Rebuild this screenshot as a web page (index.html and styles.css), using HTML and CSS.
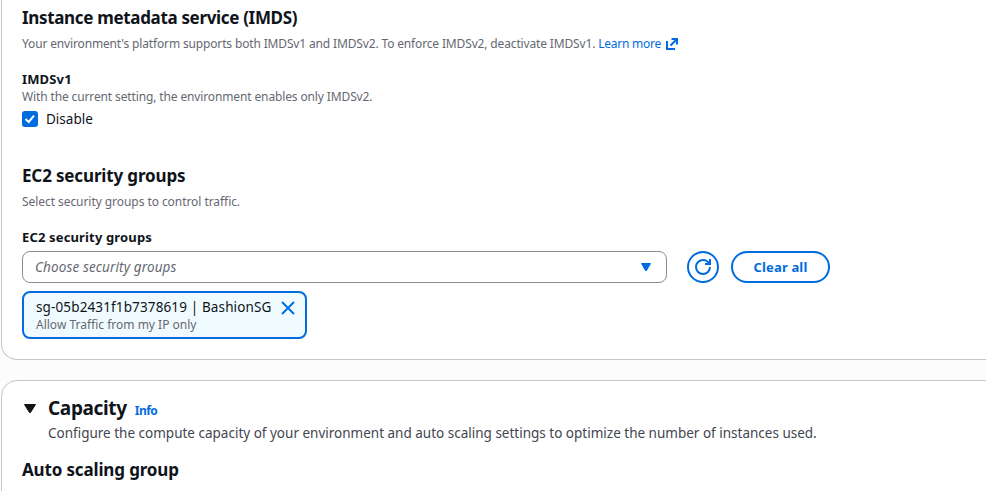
FILE: index.html
```html
<!DOCTYPE html>
<html lang="en">
<head>
<meta charset="utf-8">
<title>Configure instance traffic and scaling</title>
<link rel="stylesheet" href="styles.css">
</head>
<body>
<main class="page">
  <section class="card card-instances">
    <h3 class="heading"><span class="t-imds">Instance metadata service (IMDS)</span></h3>
    <p class="hint hint-section"><span class="t-platform">Your environment's platform supports both IMDSv1 and IMDSv2. To enforce IMDSv2, deactivate IMDSv1.</span><a class="link"><span class="t-learn">Learn more</span><svg class="external" viewBox="0 0 14 14"><path d="M6.5 2H12v5.5M5.5 8.5 12 2M2 4v8h8"/></svg></a></p>
    <div class="label"><span class="t-v1">IMDSv1</span></div>
    <p class="hint"><span class="t-setting">With the current setting, the environment enables only IMDSv2.</span></p>
    <div class="check-row"><span class="checkbox"><svg viewBox="0 0 14 14"><path d="M2.5 7 5.7 10 11 3.6"/></svg></span><span>Disable</span></div>
    <h3 class="heading heading-groups"><span class="t-ec2">EC2 security groups</span></h3>
    <p class="hint hint-section"><span class="t-select">Select security groups to control traffic.</span></p>
    <div class="label"><span class="t-label">EC2 security groups</span></div>
    <div class="controls">
      <div class="select"><span class="t-choose">Choose security groups</span><svg class="caret" viewBox="0 0 16 16"><path d="M3.5 4.5h9L8.5 11.5h-1z"/></svg></div>
      <button class="button refresh" aria-label="Refresh"><svg viewBox="0 0 16 16"><path d="M15 8c0 3.87-3.13 7-7 7s-7-3.13-7-7 3.13-7 7-7c2.79 0 5.2 1.63 6.33 4M10 5h5V0"/></svg></button>
      <button class="button clear"><span class="t-clear">Clear all</span></button>
    </div>
    <div class="token">
      <div class="token-text"><div class="token-name"><span class="t-sg">sg-05b2431f1b7378619 | BashionSG</span></div><p class="hint"><span>Allow Traffic from my IP only</span></p></div>
      <svg class="close" viewBox="0 0 16 16"><path d="m2 2 12 12M14 2 2 14"/></svg>
    </div>
  </section>
  <section class="card card-capacity">
    <div class="capacity-header">
      <svg class="expand" viewBox="0 0 16 16"><path d="M2.5 4.5h11L8.5 12.5h-1z"/></svg>
      <div>
        <h2 class="title"><span class="t-capacity">Capacity</span><a class="info"><span class="t-info">Info</span></a></h2>
        <p class="description"><span>Configure the compute capacity of your environment and auto scaling settings to optimize the number of instances used.</span></p>
      </div>
    </div>
    <h3 class="heading heading-asg"><span class="t-asg">Auto scaling group</span></h3>
  </section>
</main>
</body>
</html>
```
FILE: styles.css
```css
* { box-sizing: border-box; }
body { margin: 0; background: #fcfcfd; color: #0f141a; font: 13.5px/20px "Noto Sans", sans-serif; overflow: hidden; }
h2, h3, p { margin: 0; }
svg { display: block; flex: none; fill: none; stroke: currentColor; stroke-width: 2; }
.page { height: 491px; overflow: hidden; white-space: nowrap; display: flex; flex-direction: column; gap: 20px; }
.card { flex: none; margin-left: 1px; width: 1000px; background: #fff; border: 1px solid #c6c6cd; border-radius: 16px; padding-left: 20px; }
.card-instances { height: 360px; padding-top: 7px; border-top: 0; border-top-left-radius: 0; }
.card-capacity { height: 200px; padding-top: 15px; }
.heading { font-size: 17px; line-height: 22px; font-weight: 700; }
.heading-groups { margin-top: 36px; }
.heading-asg { margin-top: 16px; }
.hint { display: flex; font-size: 12px; line-height: 16px; color: #656871; }
.hint-section { margin: 7px 0 17px; }
.label { font-size: 13px; font-weight: 700; }
.link { display: flex; align-items: center; gap: 4px; margin-left: 3px; color: #006ce0; }
.external { width: 14px; height: 14px; }
.check-row { display: flex; align-items: center; gap: 8px; margin-top: 4px; }
.checkbox { width: 16px; height: 16px; padding: 1px; border-radius: 3px; background: #006ce0; color: #fff; }
.controls { display: flex; margin-top: 4px; }
.select { display: flex; align-items: center; justify-content: space-between; width: 645px; height: 32px; padding: 0 12px; border: 1px solid #8c8c94; border-radius: 8px; color: #656871; font-style: italic; }
.caret { width: 16px; height: 16px; fill: #006ce0; stroke: #006ce0; stroke-width: 1; }
.button { display: flex; align-items: center; justify-content: center; height: 32px; padding: 0; border: 2px solid #006ce0; border-radius: 16px; background: #fff; color: #006ce0; font: 700 13px/20px "Noto Sans", sans-serif; }
.refresh { width: 32px; margin-left: 20px; }
.refresh svg { width: 16px; height: 16px; }
.clear { width: 99px; margin-left: 12px; }
.token { display: flex; justify-content: space-between; width: 285px; height: 48px; margin-top: 8px; padding: 4px 9px 0 12px; border: 2px solid #006ce0; border-radius: 8px; background: #f0fbff; }
.close { width: 16px; height: 16px; margin-top: 3px; color: #006ce0; }
.capacity-header { display: flex; gap: 10px; }
.expand { width: 16px; height: 16px; margin-top: 4px; fill: #0f141a; stroke: #0f141a; stroke-width: 1; }
.title { display: flex; align-items: baseline; font-size: 19px; line-height: 24px; font-weight: 700; }
.info { margin-left: 8px; font-size: 12px; line-height: 16px; color: #006ce0; }
.description { margin-top: 3px; color: #424650; }
.t-imds { letter-spacing: -0.33px; }
.t-ec2, .t-asg { letter-spacing: -0.15px; }
.t-label { letter-spacing: 0.15px; }
.t-v1 { letter-spacing: 0.15px; }
.t-platform { letter-spacing: -0.15px; }
.t-learn { letter-spacing: -0.25px; }
.t-setting { letter-spacing: -0.13px; }
.t-select { letter-spacing: -0.06px; }
.t-choose, .t-sg { letter-spacing: 0.13px; }
.t-clear { letter-spacing: 0.15px; }
.t-capacity { letter-spacing: -0.35px; }
.t-info { letter-spacing: -0.5px; }
```
